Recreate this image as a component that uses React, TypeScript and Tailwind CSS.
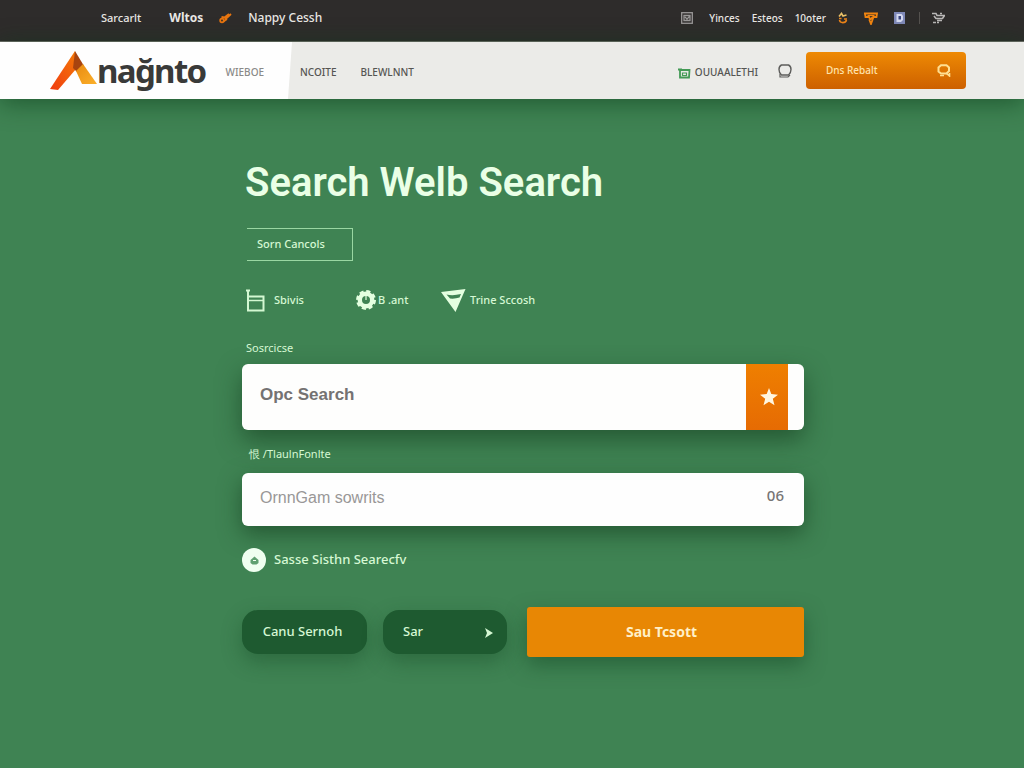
import { useState } from 'react'

const TOP_LINKS = ['Yinces', 'Esteos', '10oter']

function LogoMark() {
  return (
    <svg width="48" height="40" viewBox="0 0 48 40" aria-hidden="true">
      <defs>
        <linearGradient id="mark-left" x1="1" y1="0" x2="0" y2="1">
          <stop offset="0" stopColor="#f47a08" />
          <stop offset="1" stopColor="#f03c10" />
        </linearGradient>
        <linearGradient id="mark-right" x1="0" y1="0" x2="1" y2="1">
          <stop offset="0" stopColor="#e98a10" />
          <stop offset="1" stopColor="#fbb02a" />
        </linearGradient>
      </defs>
      <path d="M26 0 1 38l8 1 18-21z" fill="url(#mark-left)" />
      <path d="M26 0 35 15 28 21 24 17z" fill="#a8440f" />
      <path d="M34 13 27 20 33 33 48 33z" fill="url(#mark-right)" />
    </svg>
  )
}

function TagIcon() {
  return (
    <svg width="13" height="12" viewBox="0 0 13 12" fill="none" stroke="#e8750f" strokeWidth="1.800" aria-hidden="true">
      <circle cx="3" cy="8.500" r="1.800" />
      <path d="M4.500 9.500 8 7M2.500 5l3 .5L10 2M6 7.500 12 2" />
    </svg>
  )
}

function FrameIcon() {
  return (
    <svg width="12" height="12" viewBox="0 0 12 12" fill="none" stroke="#9a9898" strokeWidth="1.300" aria-hidden="true">
      <rect x=".7" y=".7" width="10.600" height="10.600" />
      <path d="M3 3.500h6v5H3zM4 5l2 2 3-3" />
    </svg>
  )
}

function LoopIcon() {
  return (
    <svg width="10" height="12" viewBox="0 0 10 12" fill="none" strokeWidth="1.600" aria-hidden="true">
      <path d="M1 4.500 3.500 1.500 5 4l3.500-1" stroke="#e9c067" />
      <path d="M1 6.500h2.500M1.500 8c.5 3.500 6 3.500 7 0M6 7h3" stroke="#ee8418" />
    </svg>
  )
}

function FunnelIcon() {
  return (
    <svg width="14" height="13" viewBox="0 0 14 13" fill="none" stroke="#f08410" strokeWidth="1.800" aria-hidden="true">
      <path d="M0 1.500h13L12.500 5H9.500L7 12 5.500 8 9 5M1 1.500 1.500 5H5l1 2" />
      <path d="M3.500 3.500h7" strokeWidth="1.200" />
    </svg>
  )
}

function BadgeIcon() {
  return (
    <svg width="11" height="12" viewBox="0 0 11 12" aria-hidden="true">
      <path d="M0 0h11v12H0z" fill="#7f89b8" />
      <path d="M2.500 2h5l1.500 2v4L7 10H2.500z" fill="#d5d9ef" />
      <path d="M4.500 4h2.500v3.500H4.500z" fill="#39457f" />
    </svg>
  )
}

function CartIcon() {
  return (
    <svg width="13" height="12" viewBox="0 0 13 12" fill="none" stroke="#b9b7b6" strokeWidth="1.600" aria-hidden="true">
      <path d="M0 1.500h4l1 2h7.500L10.500 6.500H4L2 4M8 1.500h2M5 8.500h5M1 10.500h3M5 10.500h2" />
    </svg>
  )
}

function CrateIcon() {
  return (
    <svg width="13" height="12" viewBox="0 0 13 12" fill="none" stroke="#439a55" strokeWidth="1.800" aria-hidden="true">
      <path d="M2 3h9.500L11 10.500H2zM0 2.500h4" />
      <path d="M4.500 6h4v2.500h-4z" strokeWidth="1.200" />
    </svg>
  )
}

function ChatIcon() {
  return (
    <svg width="14" height="14" viewBox="0 0 14 14" fill="none" stroke="#5d5d5b" strokeWidth="1.400" aria-hidden="true">
      <path d="M3.500 1h7Q13 2 13 5.500T10.500 11h-7Q1 9 1 5.500T3.500 1z" />
      <path d="M2 10v3h8L12 11" strokeWidth="1.200" />
    </svg>
  )
}

function LensIcon() {
  return (
    <svg width="14" height="13" viewBox="0 0 14 13" fill="none" stroke="#ffdf92" strokeWidth="2" aria-hidden="true">
      <path d="M4 9.500 1.500 7.500V3.500L4 1.300h5.500L12 3.500V7L9.500 9.500z" />
      <path d="M3 11.500h4M9 9l3.500 3V9" strokeWidth="1.600" />
    </svg>
  )
}

function BoxIcon() {
  return (
    <svg width="19" height="23" viewBox="0 0 19 23" fill="none" stroke="#d3f8d2" strokeWidth="2" aria-hidden="true">
      <path d="M2 1v20.500h15.500V7.500H2M0 1.500h4" />
      <path d="M2 11.500h15.500" strokeWidth="1.500" />
    </svg>
  )
}

function GearIcon() {
  return (
    <svg width="20" height="20" viewBox="0 0 20 20" aria-hidden="true">
      <circle cx="10" cy="10" r="8" fill="none" stroke="#e4ffe0" strokeWidth="4" strokeDasharray="3.800 2.480" />
      <circle cx="10" cy="10" r="6.200" fill="none" stroke="#e4ffe0" strokeWidth="4.400" />
      <path d="M10 6v4" stroke="#e4ffe0" strokeWidth="1.200" />
    </svg>
  )
}

function TriangleIcon() {
  return (
    <svg width="25" height="23" viewBox="0 0 25 23" aria-hidden="true">
      <path fillRule="evenodd" d="M0 3 24.500 0 14.500 23zM5.500 5.500 9 9.500Q14 10 18.500 8.500L20 5Q12 7 5.500 5.500z" fill="#e4ffe0" />
    </svg>
  )
}

function StarIcon() {
  return (
    <svg width="18" height="18" viewBox="0 0 18 18" aria-hidden="true">
      <path d="M9 0 11.300 6 18 6.700 12.800 10.800 14.500 17.300 9 13.700 3.500 17.300 5.200 10.800 0 6.700 6.700 6z" fill="#fff6e0" />
    </svg>
  )
}

function TopBar() {
  return (
    <div className="flex h-[42px] items-start justify-between border-b border-[#6f6d69] bg-[#2e2c2b] pt-2 pr-[79px] pl-[101px] text-[#e9e7e4]">
      <nav className="flex h-5 items-center">
        <a href="#" className="text-[11px] font-medium">Sarcarlt</a>
        <a href="#" className="ml-7 text-xs font-bold">Wltos</a>
        <span className="ml-4"><TagIcon /></span>
        <a href="#" className="ml-4 text-xs font-medium">Nappy Cessh</a>
      </nav>
      <nav className="flex h-5 items-center text-[10px] font-medium">
        <FrameIcon />
        <span className="ml-4 flex gap-3">
          {TOP_LINKS.map((label) => (
            <a key={label} href="#">{label}</a>
          ))}
        </span>
        <span className="ml-3 flex items-center gap-4">
          <LoopIcon />
          <FunnelIcon />
          <BadgeIcon />
        </span>
        <span className="mr-3 ml-[14px] h-3 w-px bg-[#55524f]" />
        <CartIcon />
      </nav>
    </div>
  )
}

function Header() {
  return (
    <header className="relative flex h-[57px] items-stretch bg-[#ebebe8] text-[10px] font-medium text-[#555552] shadow-[0_4px_24px_rgba(10,60,25,0.6)]">
      <div className="flex w-[292px] items-center bg-[#fefefe] pl-[49px] [clip-path:polygon(0_0,100%_0,288px_100%,0_100%)]">
        <a href="#" className="flex items-center">
          <LogoMark />
          <span className="font-['Noto_Sans'] text-[33px] leading-10 font-bold tracking-tighter text-[#393a39]">nağnto</span>
        </a>
        <a href="#" className="ml-5 pt-1 text-[#8a8a88]">WIEBOE</a>
      </div>
      <nav className="ml-2 flex items-center gap-6 pt-1">
        <a href="#">NCOITE</a>
        <a href="#">BLEWLNNT</a>
      </nav>
      <div className="mr-[58px] ml-auto flex items-center">
        <a href="#" className="flex items-center gap-1 pt-1">
          <CrateIcon /> OUUAALETHI
        </a>
        <button type="button" aria-label="Chat" className="mr-[14px] ml-5"><ChatIcon /></button>
        <button
          type="button"
          className="flex h-[37px] w-40 items-center justify-between rounded-sm bg-linear-to-b from-[#ee8a04] to-[#cd6000] pr-[15px] pl-5 text-[10px] text-[#ffe3ad]"
        >
          Dns Rebalt
          <LensIcon />
        </button>
      </div>
    </header>
  )
}

export default function App() {
  const [first, setFirst] = useState('Opc Search')
  const [second, setSecond] = useState('')
  const [checked, setChecked] = useState(false)

  return (
    <div className="min-h-screen bg-[#3f8353] font-['Noto_Sans',sans-serif]">
      <TopBar />
      <Header />
      <main className="pt-[60px] pb-20 pl-[22px] text-[#d6f8d4]">
        <form className="mx-auto max-w-[562px]" onSubmit={(e) => e.preventDefault()}>
          <h1 className="ml-[3px] font-['Roboto',sans-serif] text-[40px] leading-12 font-semibold text-[#eaffe6]">Search Welb Search</h1>

          <button type="button" className="mt-[21px] ml-[5px] block h-[33px] w-[106px] border border-l-0 border-[#9ad7a2] pl-[10px] text-left text-[11px] font-medium">
            Sorn Cancols
          </button>

          <div className="mt-[27px] ml-1 flex h-6 items-center text-[11px] font-medium">
            <a href="#" className="flex w-[110px] items-center gap-[9px]"><BoxIcon /> Sbivis</a>
            <a href="#" className="flex w-[85px] items-center gap-[2px]"><GearIcon /> B .ant</a>
            <a href="#" className="flex items-center gap-1"><TriangleIcon /> Trine Sccosh</a>
          </div>

          <label htmlFor="source" className="mt-7 ml-1 block text-[11px] leading-4">Sosrcicse</label>
          <div className="mt-2 flex h-[66px] overflow-hidden rounded-md bg-[#fefefd] pr-4 shadow-[0_10px_24px_rgba(20,60,30,0.6)]">
            <input
              id="source"
              value={first}
              onChange={(e) => setFirst(e.target.value)}
              className="min-w-0 flex-1 pb-1 pl-[18px] font-['Liberation_Sans',sans-serif] text-[17px] font-bold text-[#747272] outline-none"
            />
            <button type="button" aria-label="Favourite" className="flex w-[42px] items-center justify-center bg-linear-to-b from-[#ef7f00] to-[#e66b03] pl-1">
              <StarIcon />
            </button>
          </div>

          <label htmlFor="option" className="mt-4 ml-[7px] block text-[11px] leading-4">恨 /TlaulnFonlte</label>
          <div className="mt-[11px] flex h-[53px] items-center rounded-md bg-[#fefefe] pr-5 pb-1 pl-[18px] shadow-[0_8px_22px_rgba(20,60,30,0.6)]">
            <input
              id="option"
              value={second}
              placeholder="OrnnGam sowrits"
              onChange={(e) => setSecond(e.target.value)}
              className="min-w-0 flex-1 font-['Liberation_Sans',sans-serif] text-base text-[#747272] outline-none placeholder:text-[#999797]"
            />
            <span className="pb-1 text-[15px] font-medium text-[#777575]">06</span>
          </div>

          <label className="mt-[22px] flex h-6 items-center gap-2 text-[13px] font-medium">
            <span className="relative flex size-6 items-center justify-center">
              <input
                type="checkbox"
                checked={checked}
                onChange={(e) => setChecked(e.target.checked)}
                className="size-6 appearance-none rounded-full bg-[#effff0]"
              />
              <svg className="pointer-events-none absolute" width="9" height="9" viewBox="0 0 9 9" aria-hidden="true">
                <path d="M4.500.5 8.500 4v3l-2 1.500h-4L.5 7V4z" fill="#5fa070" />
                <path d="M3 4.500h3" stroke="#effff0" />
              </svg>
            </span>
            Sasse Sisthn Searecfv
          </label>

          <div className="mt-[35px] flex items-center text-[13px] font-medium">
            <button type="button" className="mr-4 h-11 w-[125px] rounded-2xl bg-[#1e5a30] pr-1 shadow-[0_8px_20px_rgba(20,70,35,0.4)]">
              Canu Sernoh
            </button>
            <div className="relative mr-5 w-[124px]">
              <select aria-label="Sar" className="h-11 w-full appearance-none rounded-2xl bg-[#1e5a30] pl-5 shadow-[0_8px_20px_rgba(20,70,35,0.4)]">
                <option>Sar</option>
              </select>
              <svg className="pointer-events-none absolute top-[18px] right-[14px]" width="9" height="10" viewBox="0 0 9 10" aria-hidden="true">
                <path d="M1 0 9 5 1 10 3 5z" fill="#d6f8d4" />
              </svg>
            </div>
            <button type="submit" className="h-[50px] flex-1 rounded-[3px] bg-[#e88704] pr-2 text-sm font-bold text-[#fff0c8] shadow-[0_8px_20px_rgba(20,70,35,0.5)]">
              Sau Tcsott
            </button>
          </div>
        </form>
      </main>
    </div>
  )
}
